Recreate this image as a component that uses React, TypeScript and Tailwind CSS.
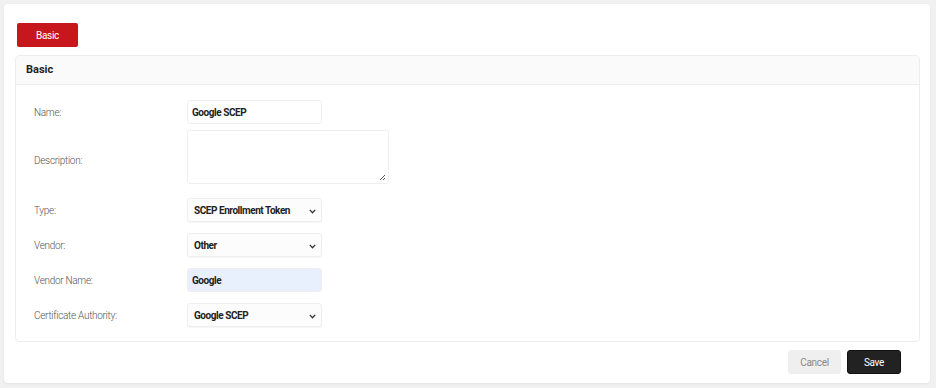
import React from "react";

function Chevron() {
  return (
    <svg width="7" height="5" viewBox="0 0 7 5" className="absolute right-[5px] top-[10px]">
      <path d="M0.8 0.9 L3.5 3.7 L6.2 0.9" fill="none" stroke="#333" strokeWidth="1.3" />
    </svg>
  );
}

function Row({ label, children, className = "", labelClass = "" }: { label: string; children: React.ReactNode; className?: string; labelClass?: string }) {
  return (
    <div className={"flex items-center " + className}>
      <div className={"w-[153px] shrink-0 text-[10px] font-light tracking-[-0.3px] text-[#555] " + labelClass}>{label}</div>
      {children}
    </div>
  );
}

function Field({ value, bg = "bg-white", select = false }: { value: string; bg?: string; select?: boolean }) {
  return (
    <div
      className={
        "relative w-[135px] h-[24px] rounded-[3px] border border-[#efefef] flex items-center text-[10px] font-bold tracking-[-0.45px] text-[#222] " +
        bg +
        (select ? " pl-[6px] shadow-[0_1px_1px_rgba(0,0,0,0.04)]" : " pl-[4px]")
      }
    >
      {value}
      {select && <Chevron />}
    </div>
  );
}

export default function App() {
  return (
    <div className="w-[936px] h-[388px] bg-[#f1f1f1] pt-[4px] pl-[4px]" style={{ fontFamily: "Roboto, 'Liberation Sans', sans-serif" }}>
      <div className="w-[926px] h-[379px] bg-white rounded-[4px] shadow-[0_1px_3px_rgba(0,0,0,0.06)] pt-[19px] pl-[11px]">
        <button className="ml-[2px] w-[61px] h-[24px] bg-[#c8161d] rounded-[2px] text-white text-[10px] tracking-[-0.3px] flex items-center justify-center">
          Basic
        </button>
        <div className="mt-[8px] w-[905px] h-[287px] border border-[#ededed] rounded-[4px] overflow-hidden">
          <div className="h-[29px] bg-[#fafafa] border-b border-[#ededed] flex items-center pl-[10px] text-[11px] font-bold text-[#222]">
            Basic
          </div>
          <div className="pl-[18px] pt-[15px]">
            <Row label="Name:">
              <Field value="Google SCEP" />
            </Row>
            <Row label="Description:" className="mt-[6px]" labelClass="pt-[7px]">
              <div className="relative w-[202px] h-[54px] rounded-[3px] border border-[#efefef] bg-white">
                <svg width="8" height="8" viewBox="0 0 8 8" className="absolute right-[2px] bottom-[2px]">
                  <path d="M7 2 L2 7 M7 5 L5 7" stroke="#555" strokeWidth="1" />
                </svg>
              </div>
            </Row>
            <Row label="Type:" className="mt-[14px]">
              <Field value="SCEP Enrollment Token" bg="bg-[#fcfcfc]" select />
            </Row>
            <Row label="Vendor:" className="mt-[11px]">
              <Field value="Other" bg="bg-[#fcfcfc]" select />
            </Row>
            <Row label="Vendor Name:" className="mt-[11px]">
              <Field value="Google" bg="bg-[#e8f0fe]" />
            </Row>
            <Row label="Certificate Authority:" className="mt-[11px]">
              <Field value="Google SCEP" bg="bg-[#fcfcfc]" select />
            </Row>
          </div>
        </div>
        <div className="w-[905px] flex justify-end gap-[6px] pr-[19px] mt-[8px]">
          <button className="w-[53px] h-[24px] rounded-[3px] bg-[#efefef] text-[10px] tracking-[-0.3px] text-[#888] flex items-center justify-center">
            Cancel
          </button>
          <button className="w-[54px] h-[24px] rounded-[3px] bg-[#222] border border-[#111] text-[10px] tracking-[-0.3px] text-white flex items-center justify-center">
            Save
          </button>
        </div>
      </div>
    </div>
  );
}
